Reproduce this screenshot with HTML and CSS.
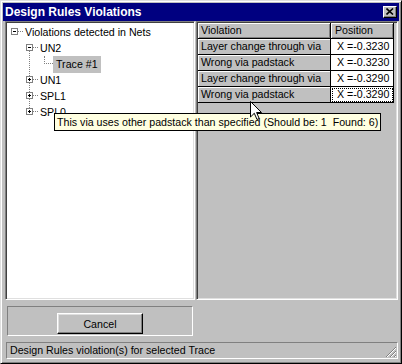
FILE: index.html
```html
<!DOCTYPE html>
<html>
<head>
<meta charset="utf-8">
<link rel="stylesheet" href="styles.css">
</head>
<body>
<div class="window">
  <div class="titlebar">
    <span class="title">Design Rules Violations</span>
    <span class="close"><svg width="8" height="7" viewBox="0 0 8 7"><path d="M0.5 0.5 L7 6.5 M7 0.5 L0.5 6.5" stroke="#000" stroke-width="1.6"/></svg></span>
  </div>
  <div class="panes">
    <div class="tree">
      <div class="row lvl0">
        <span class="gutter"><span class="box minus"></span><span class="hl"></span></span>
        <span class="label">Violations detected in Nets</span>
      </div>
      <div class="group">
        <div class="row lvl1">
          <span class="gutter"><span class="box minus"></span><span class="hl"></span></span>
          <span class="label">UN2</span>
        </div>
        <div class="row lvl2">
          <span class="gutter"><span class="vl"></span><span class="hl leaf"></span></span>
          <span class="label sel">Trace #1</span>
        </div>
        <div class="row lvl1">
          <span class="gutter"><span class="box plus"></span><span class="hl"></span></span>
          <span class="label">UN1</span>
        </div>
        <div class="row lvl1">
          <span class="gutter"><span class="box plus"></span><span class="hl"></span></span>
          <span class="label">SPL1</span>
        </div>
        <div class="row lvl1">
          <span class="gutter"><span class="box plus"></span><span class="hl"></span></span>
          <span class="label">SPL0</span>
        </div>
      </div>
    </div>
    <div class="list">
      <div class="grid">
        <div class="cell hd">Violation</div>
        <div class="cell hd">Position</div>
        <div class="cell v">Layer change through via</div>
        <div class="cell p">X =-0.3230</div>
        <div class="cell v">Wrong via padstack</div>
        <div class="cell p">X =-0.3230</div>
        <div class="cell v">Layer change through via</div>
        <div class="cell p">X =-0.3290</div>
        <div class="cell v">Wrong via padstack</div>
        <div class="cell p focus">X =-0.3290</div>
      </div>
    </div>
  </div>
  <div class="actions">
    <div class="btnpanel">
      <button class="btn">Cancel</button>
    </div>
  </div>
  <div class="status">
    <span>Design Rules violation(s) for selected Trace</span>
    <svg class="grip" width="12" height="12" viewBox="0 0 12 12">
      <path d="M11 1 L1 11 M11 5 L5 11 M11 9 L9 11" stroke="#808080" stroke-width="1"/>
      <path d="M11 2 L2 11 M11 6 L6 11 M11 10 L10 11" stroke="#ffffff" stroke-width="1"/>
    </svg>
  </div>
</div>
<div class="tooltip">This via uses other padstack than specified (Should be: 1&nbsp; Found: 6)</div>
<svg class="cursor" width="13" height="20" viewBox="0 0 13 20">
  <path d="M0.5 0.5 L0.5 16 L4.3 12.3 L7 18.5 L9.2 17.5 L6.6 11.5 L11.5 11.5 Z" fill="#fff" stroke="#000" stroke-width="1"/>
</svg>
</body>
</html>
```
FILE: styles.css
```css
* { box-sizing: border-box; }
html, body {
  margin: 0;
  padding: 0;
  width: 402px;
  height: 364px;
  overflow: hidden;
  background: #c0c0c0;
  font-family: "Liberation Sans", Arial, sans-serif;
  font-size: 10.65px;
  color: #000;
}
body { position: relative; }
.window {
  width: 402px;
  height: 364px;
  border-top: 1px solid #dfdfdf;
  border-left: 1px solid #dfdfdf;
  border-right: 1px solid #000;
  border-bottom: 1px solid #000;
  box-shadow: inset 1px 1px #fff, inset -1px -1px #808080;
  padding: 2px;
  display: flex;
  flex-direction: column;
}
.titlebar {
  height: 18px;
  background: #000080;
  color: #fff;
  display: flex;
  align-items: center;
  justify-content: space-between;
  padding: 0 2px 0 2px;
}
.title {
  font-weight: bold;
  font-size: 12px;
}
.close {
  width: 14px;
  height: 12px;
  background: #c0c0c0;
  border-top: 1px solid #fff;
  border-left: 1px solid #fff;
  border-right: 1px solid #000;
  border-bottom: 1px solid #000;
  box-shadow: inset -1px -1px #808080;
  display: flex;
  align-items: center;
  justify-content: center;
  padding-bottom: 1px;
}
.close svg { display: block; }
.panes {
  display: flex;
  height: 279px;
  padding-left: 2px;
  gap: 1px;
}
.tree {
  width: 190px;
  height: 279px;
  background: #fff;
  border-top: 1px solid #808080;
  border-left: 1px solid #808080;
  border-right: 1px solid #fff;
  border-bottom: 1px solid #fff;
  box-shadow: inset 1px 1px #404040, inset -1px -1px #dfdfdf;
  padding: 2px;
}
.row {
  display: flex;
  align-items: center;
  height: 16px;
}
.lvl0 { padding-left: 3px; }
.lvl1 { padding-left: 18px; }
.lvl2 { padding-left: 33px; }
.gutter {
  position: relative;
  width: 12px;
  height: 16px;
  flex: none;
}
.box {
  position: absolute;
  left: 0;
  top: 4px;
  width: 7px;
  height: 7px;
  border: 1px solid #808080;
  background: #fff;
  z-index: 1;
}
.box::before {
  content: "";
  position: absolute;
  left: 1px;
  top: 2px;
  width: 3px;
  height: 1px;
  background: #000;
}
.box.plus::after {
  content: "";
  position: absolute;
  left: 2px;
  top: 1px;
  width: 1px;
  height: 3px;
  background: #000;
}
.hl {
  position: absolute;
  left: 7px;
  top: 7px;
  width: 5px;
  border-top: 1px dotted #808080;
}
.hl.leaf {
  left: 3px;
  width: 9px;
}
.vl {
  position: absolute;
  left: 3px;
  top: 0;
  height: 8px;
  border-left: 1px dotted #808080;
}
.group { position: relative; }
.group::before {
  content: "";
  position: absolute;
  left: 21px;
  top: 8px;
  bottom: 8px;
  border-left: 1px dotted #808080;
}
.label {
  padding: 0 2px;
  height: 16px;
  line-height: 16px;
  white-space: nowrap;
}
.label.sel {
  background: #c0c0c0;
  padding: 0 3px;
  height: 17px;
  line-height: 17px;
}
.list {
  width: 202px;
  height: 279px;
  background: #c0c0c0;
  border-top: 1px solid #808080;
  border-left: 1px solid #808080;
  border-right: 1px solid #fff;
  border-bottom: 1px solid #fff;
  box-shadow: inset 1px 1px #404040, inset -1px -1px #dfdfdf;
  padding: 1px;
}
.grid {
  display: grid;
  grid-template-columns: 133px 63px;
  grid-auto-rows: 16px;
}
.cell {
  height: 16px;
  line-height: 15px;
  white-space: nowrap;
  overflow: hidden;
  border-right: 1px solid #000;
  border-bottom: 1px solid #000;
  padding-left: 3px;
}
.cell.hd {
  background: #c0c0c0;
  box-shadow: inset 1px 1px #fff, inset -1px -1px #808080;
}
.cell.hd + .cell.hd { padding-left: 4px; }
.cell.v {
  background: #c0c0c0;
  box-shadow: inset 1px 1px #fff;
}
.cell.p {
  background: #fff;
  padding-left: 6px;
}
.cell.focus {
  outline: 1px dotted #000;
  outline-offset: -2px;
}
.actions {
  margin-top: 6px;
  height: 30px;
  padding-left: 4px;
  display: flex;
}
.btnpanel {
  width: 186px;
  height: 30px;
  border-top: 1px solid #808080;
  border-left: 1px solid #808080;
  border-right: 1px solid #fff;
  border-bottom: 1px solid #fff;
  display: flex;
  justify-content: center;
  padding-top: 6px;
}
.btn {
  width: 86px;
  height: 21px;
  margin: 0;
  padding: 0;
  font-family: "Liberation Sans", Arial, sans-serif;
  font-size: 10.65px;
  color: #000;
  background: #c0c0c0;
  border-top: 1px solid #fff;
  border-left: 1px solid #fff;
  border-right: 1px solid #000;
  border-bottom: 1px solid #000;
  box-shadow: inset -1px -1px #808080, inset 1px 1px #dfdfdf;
}
.status {
  margin-top: 6px;
  margin-left: 3px;
  margin-right: 1px;
  height: 17px;
  border-top: 1px solid #808080;
  border-left: 1px solid #808080;
  border-right: 1px solid #fff;
  border-bottom: 1px solid #fff;
  display: flex;
  align-items: center;
  justify-content: space-between;
  padding-left: 3px;
  line-height: 15px;
}
.grip {
  display: block;
  align-self: flex-end;
}
.tooltip {
  position: absolute;
  left: 54px;
  top: 113px;
  height: 18px;
  line-height: 16px;
  padding: 0 2px;
  background: #ffffe1;
  border: 1px solid #000;
  white-space: nowrap;
  z-index: 5;
}
.cursor {
  position: absolute;
  left: 250px;
  top: 101px;
  z-index: 6;
}
```
